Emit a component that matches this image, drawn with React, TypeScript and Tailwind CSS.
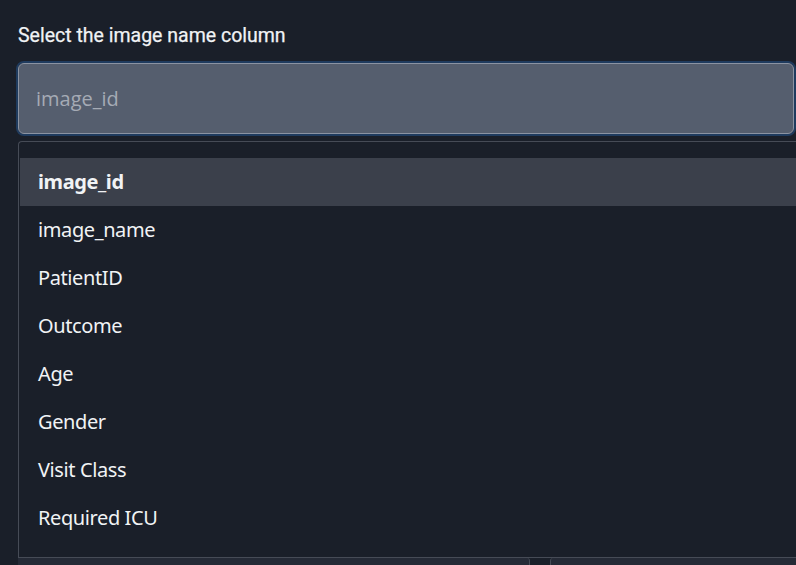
import React from 'react';

const options = ['image_id', 'image_name', 'PatientID', 'Outcome', 'Age', 'Gender', 'Visit Class', 'Required ICU'];

export default function App() {
  const selected = 'image_id';
  return (
    <div className="h-[565px] w-[796px] overflow-hidden bg-[#1a1f29] pl-[18px] pt-[24px]">
      <label className="block text-[19.5px] font-normal text-[#f1f3f5] font-['Roboto',sans-serif] leading-[24px] [-webkit-text-stroke:0.25px_#f1f3f5]">
        Select the image name column
      </label>
      <div className="mt-[13px] -ml-[2px] rounded-[8px] border-2 border-[#1f3b5e]">
        <div className="flex h-[71px] items-center rounded-[6px] border border-[#8b93a2] bg-[#555e6e] pl-[17px] text-[20px] text-[#a5abb5] font-['Open_Sans',sans-serif]">
          image_id
        </div>
      </div>
      <div className="mt-[5px] rounded-tl-[4px] border-l border-t border-[#464b56] pb-[15px] pt-[16px] pl-px">
        {options.map((o) => (
          <div
            key={o}
            className={`flex h-[48px] items-center pl-[18px] text-[20px] text-[#f1f3f5] font-['Noto_Sans',sans-serif] tracking-[-0.4px] ${
              o === selected ? 'bg-[#3b404b] font-bold' : ''
            }`}
          >
            {o}
          </div>
        ))}
      </div>
      <div className="flex gap-[20px] border-t border-[#464b56]">
        <div className="h-[10px] w-[512px] rounded-tr-[3px] border-r border-[#464b56] bg-[#252a36]" />
        <div className="h-[10px] flex-1 rounded-tl-[3px] border-l border-[#464b56] bg-[#252a36]" />
      </div>
    </div>
  );
}
